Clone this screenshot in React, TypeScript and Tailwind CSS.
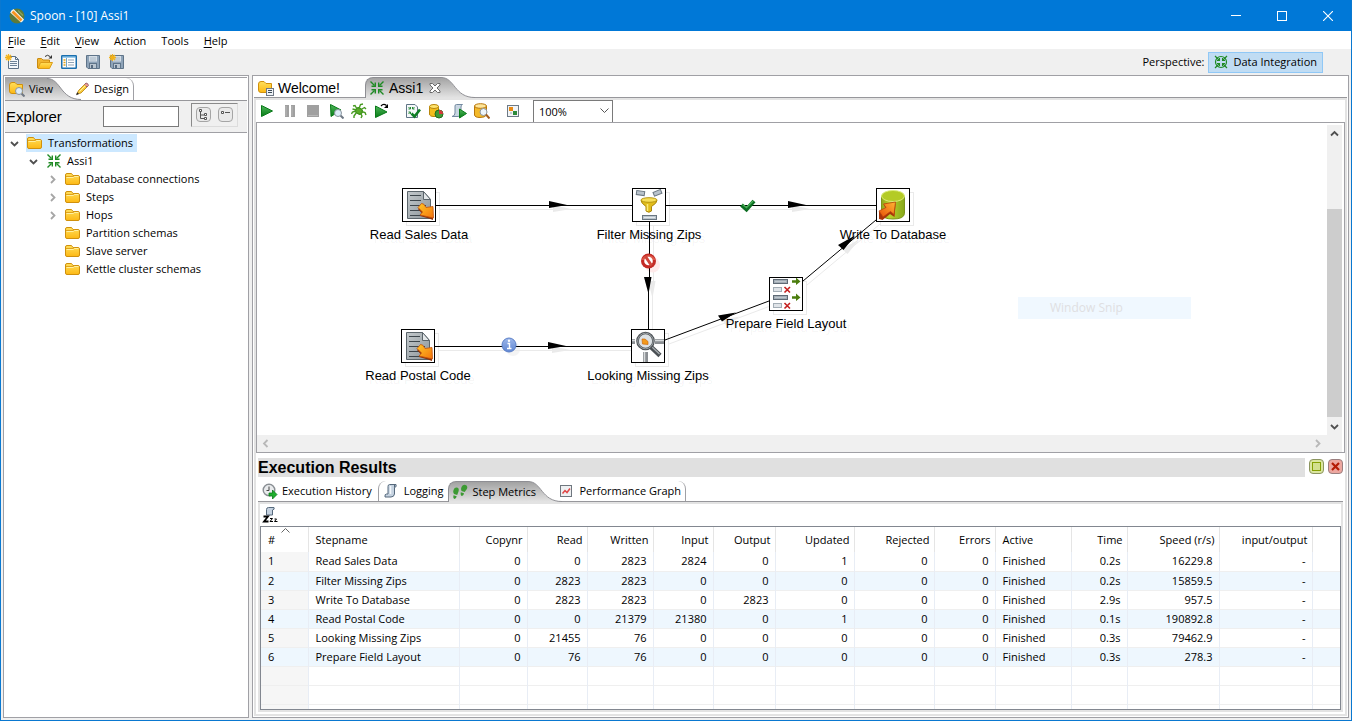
import React from "react";

type IconProps = { children: React.ReactNode; size?: number };

function Ico({ children, size = 16 }: IconProps) {
  return (
    <svg width={size} height={size} viewBox={`0 0 ${size} ${size}`} className="block shrink-0" aria-hidden="true">
      {children}
    </svg>
  );
}

function Gradients() {
  return (
    <svg width="0" height="0" className="absolute" aria-hidden="true">
      <defs>
        <linearGradient id="tab" x1="0" y1="0" x2="0" y2="1">
          <stop offset="0" stopColor="#a2a2a2" />
          <stop offset="1" stopColor="#e4e4e4" />
        </linearGradient>
        <linearGradient id="gold" x1="0" y1="0" x2="0" y2="1">
          <stop offset="0" stopColor="#ffdf5c" />
          <stop offset="1" stopColor="#fdb813" />
        </linearGradient>
        <linearGradient id="play" x1="0" y1="0" x2="0" y2="1">
          <stop offset="0" stopColor="#4fb85a" />
          <stop offset="1" stopColor="#067a16" />
        </linearGradient>
        <linearGradient id="steel" x1="0" y1="0" x2="1" y2="1">
          <stop offset="0" stopColor="#c3c9cc" />
          <stop offset="1" stopColor="#8d969b" />
        </linearGradient>
        <linearGradient id="fire" x1="0" y1="0" x2="1" y2="1">
          <stop offset="0" stopColor="#ffc928" />
          <stop offset="1" stopColor="#f4730c" />
        </linearGradient>
        <linearGradient id="fireUp" x1="0" y1="1" x2="1" y2="0">
          <stop offset="0" stopColor="#e8500a" />
          <stop offset="1" stopColor="#ffb733" />
        </linearGradient>
        <linearGradient id="lime" x1="0" y1="0" x2="1" y2="0">
          <stop offset="0" stopColor="#8fa61b" />
          <stop offset="0.35" stopColor="#bcd22e" />
          <stop offset="1" stopColor="#86a81a" />
        </linearGradient>
        <linearGradient id="info" x1="0" y1="0" x2="0" y2="1">
          <stop offset="0" stopColor="#9db7ea" />
          <stop offset="1" stopColor="#5f86d3" />
        </linearGradient>
      </defs>
    </svg>
  );
}

const Folder = () => (
  <Ico>
    <path d="M0.500 4 Q0.500 2.500 2 2.500 H6.500 L8 4.500 H13 Q14.500 4.500 14.500 6 V12 Q14.500 13.500 13 13.500 H2 Q0.500 13.500 0.500 12 Z" fill="url(#gold)" stroke="#d0900c" />
    <path d="M1.500 6.500 H8 L9.500 5.500 H13.500" fill="none" stroke="#fff0a0" />
    <path d="M1 5.500 H8 L9.500 4.500" fill="none" stroke="#e0a31a" />
  </Ico>
);

const Lens = () => (
  <>
    <path d="M12 12 L15.500 15.500" stroke="#6f7884" strokeWidth="2" />
    <circle cx="10" cy="10" r="3.500" fill="#dcecf8" stroke="#8b949e" />
  </>
);

const FolderLens = () => (
  <Ico>
    <path d="M0.500 4 Q0.500 1.500 3 1.500 H6 L8 3.500 H13.500 V12.500 H3 Q0.500 12.500 0.500 10 Z" fill="url(#gold)" stroke="#d0900c" />
    <Lens />
  </Ico>
);

const FolderPage = () => (
  <Ico>
    <path d="M0.500 4 Q0.500 1.500 3 1.500 H6 L8 3.500 H13.500 V12.500 H3 Q0.500 12.500 0.500 10 Z" fill="url(#gold)" stroke="#d0900c" />
    <rect x="8.500" y="8.500" width="7" height="7" fill="#eef2f6" stroke="#6f7884" />
    <path d="M10 10.500 H14 M10 12.500 H14" stroke="#3c4956" />
  </Ico>
);

const Pencil = () => (
  <Ico>
    <path d="M3 13 L4.500 9.500 L10.500 3.500 L13 6 L7 12 Z" fill="#f8cb3c" stroke="#c08a1c" strokeWidth="0.900" />
    <path d="M10.500 3.500 L12 2 Q14 2 14.500 4.500 L13 6 Z" fill="#ef9a8e" stroke="#8e5a66" strokeWidth="0.900" />
    <path d="M2 14.200 L3.200 11.200 L5 13 Z" fill="#222" />
    <path d="M5.500 10.500 L11.500 4.500" stroke="#fff0a0" />
  </Ico>
);

const InArrows = () => (
  <Ico>
    <g stroke="#1f8a24" fill="none" strokeWidth="1.400">
      <path d="M1.500 1.500 L5.500 5.500 M14.500 1.500 L10.500 5.500 M1.500 14.500 L5.500 10.500 M14.500 14.500 L10.500 10.500" />
      <path d="M2.500 6.300 H6.300 V2.500 M13.500 6.300 H9.700 V2.500 M2.500 9.700 H6.300 V13.500 M13.500 9.700 H9.700 V13.500" />
    </g>
  </Ico>
);

const Star = () => (
  <path d="M3.500 0 V7 M0 3.500 H7 M1 1 L6 6 M6 1 L1 6" stroke="#f3b219" strokeWidth="1.300" />
);

const NewFile = () => (
  <Ico>
    <path d="M3.500 2.500 H10.500 L13.500 5.500 V14.500 H3.500 Z" fill="#f4f8fc" stroke="#5d7186" />
    <path d="M10.500 2.500 V5.500 H13.500" fill="none" stroke="#5d7186" />
    <path d="M5 7.500 H12 M5 9.500 H12 M5 11.500 H12" stroke="#6d8297" />
    <Star />
  </Ico>
);

const OpenFile = () => (
  <Ico>
    <path d="M0.500 14 V5 Q0.500 4.500 1 4.500 H4.500 L6 6 H12.500 V8" fill="#f2b630" stroke="#c98a10" />
    <path d="M1 14.500 L3.500 8.500 H15.500 L12.500 14.500 Z" fill="url(#gold)" stroke="#dc9c18" />
    <path d="M8 2.500 Q10.500 0 13 2.500" fill="none" stroke="#333" />
    <path d="M15 1 V4.500 H11.500 Z" fill="#333" />
  </Ico>
);

const Explore = () => (
  <Ico>
    <rect x="0.750" y="1.750" width="14.500" height="12.500" rx="0.500" fill="#fff" stroke="#1b6fae" strokeWidth="1.500" />
    <path d="M1.500 3 H14.500" stroke="#3f9ad6" />
    <path d="M5.500 4 V13.500" stroke="#6fa6cc" />
    <path d="M2.500 6 H4.500 M2.500 8.500 H4.500 M2.500 11 H4.500" stroke="#e3a21a" strokeWidth="1.500" />
    <path d="M7 6 H13 M7 8.500 H13 M7 11 H13" stroke="#8fa3b5" />
  </Ico>
);

const DiskShape = () => (
  <>
    <path d="M1.500 1.500 H14.500 V14.500 H3 L1.500 13 Z" fill="#8ea3b8" stroke="#5f7489" />
    <rect x="4" y="2" width="8" height="5.500" fill="#d5dee6" />
    <path d="M5 4 H11 M5 6 H11" stroke="#a9b8c6" />
    <rect x="4.500" y="9.500" width="7" height="5" fill="#b9c5d0" stroke="#5f7489" />
    <rect x="6" y="11" width="2" height="3" fill="#566a80" />
  </>
);

const Disk = () => (
  <Ico>
    <DiskShape />
  </Ico>
);

const DiskAs = () => (
  <Ico>
    <DiskShape />
    <Star />
  </Ico>
);

const Play = () => (
  <Ico>
    <path d="M2.500 2.500 L13.500 8 L2.500 13.500 Z" fill="url(#play)" stroke="#0a7a1a" />
  </Ico>
);

const Pause = () => (
  <Ico>
    <rect x="3" y="2" width="4" height="12" fill="#a0a0a0" />
    <rect x="9" y="2" width="4" height="12" fill="#a0a0a0" />
    <path d="M4 3 V13 M10 3 V13" stroke="#b8b8b8" />
  </Ico>
);

const Stop = () => (
  <Ico>
    <rect x="2" y="2" width="12" height="12" fill="#a0a0a0" />
    <path d="M3 12.500 H13" stroke="#b8b8b8" />
  </Ico>
);

const Preview = () => (
  <Ico>
    <path d="M2.500 1.500 L13 7 L3 13.500 Z" fill="url(#play)" stroke="#0a7a1a" />
    <Lens />
  </Ico>
);

const Bug = () => (
  <Ico>
    <ellipse cx="8" cy="8" rx="3.600" ry="3" transform="rotate(35 8 8)" fill="#5aab2b" stroke="#3b8a1a" />
    <path
      d="M6 6 L4 2.500 L2 3 M8 5.500 L9.500 1.500 L12 1 M10 6.500 L13.500 4.500 L15 6 M10.500 8.500 L14 9.500 L15 12 M9.500 10 L11 13 L10 15 M5.500 9.500 L3 13 L3 15 M5 8 L1.500 9 L0.500 11 M5.500 7 L1.500 6"
      fill="none"
      stroke="#469a20"
      strokeWidth="1.400"
    />
  </Ico>
);

const Replay = () => (
  <Ico>
    <path d="M1.500 3 L13 9 L1.500 14.500 Z" fill="url(#play)" stroke="#0a7a1a" />
    <path d="M7 3 Q9.500 0 12.500 2.500" fill="none" stroke="#000" strokeWidth="1.200" />
    <path d="M14 1 V5 H10 Z" fill="#000" />
  </Ico>
);

const Verify = () => (
  <Ico>
    <path d="M1.500 1.500 H10 L12.500 4 V14.500 H1.500 Z" fill="#f5f8fa" stroke="#5f7485" />
    <path d="M3.500 4 L5.500 6 M9.500 4 L7.500 6 M3.500 11 L5.500 9 M3.500 6 H5.500 V4 M9.500 6 H7.500 V4 M3.500 9 H5.500 V11" fill="none" stroke="#278a36" />
    <path d="M6.500 10.500 L9.500 13.500 L15 6.500" fill="none" stroke="#0f7d25" strokeWidth="2.600" />
  </Ico>
);

const Cyl = () => (
  <>
    <path d="M1.500 3.500 V11 Q1.500 13.500 6 13.500 T10.500 11 V3.500 Z" fill="#f3bd1d" stroke="#b8860b" />
    <ellipse cx="6" cy="3.500" rx="4.500" ry="2" fill="#ffe46e" stroke="#b8860b" />
  </>
);

const Impact = () => (
  <Ico>
    <Cyl />
    <circle cx="11" cy="11" r="4" fill="#3f9a35" stroke="#226d1c" />
    <path d="M11 11 V7 A4 4 0 0 1 15 11 Z" fill="#d6383a" />
  </Ico>
);

const SqlRun = () => (
  <Ico>
    <path d="M5.500 1.500 H11.500 Q10 2 10 4 V11 Q9.500 13.500 7 13.500 H1 Q4 13 4 10 V3 Q4 1.500 5.500 1.500 Z" fill="#c9d6e2" stroke="#7389a0" />
    <path d="M8.500 6 L15.500 10.500 L8.500 15 Z" fill="url(#play)" stroke="#0a7a1a" />
  </Ico>
);

const DbLens = () => (
  <Ico>
    <path d="M0.500 3 V12 Q1 14.500 6 14.500 T12.500 12 V3 Z" fill="#f3b92a" stroke="#b8760b" />
    <ellipse cx="6.500" cy="3" rx="6" ry="2.300" fill="#ffe69a" stroke="#b8760b" />
    <circle cx="9.500" cy="9" r="3.500" fill="#eef5fb" stroke="#8b949e" />
    <path d="M12 11.500 L15.500 15.500" stroke="#a35c20" strokeWidth="2" />
  </Ico>
);

const Arrange = () => (
  <Ico>
    <rect x="2.500" y="2.500" width="11" height="11" fill="#f2f4f6" stroke="#6d7a86" />
    <rect x="4" y="4" width="4" height="4" fill="#e88a13" />
    <rect x="8" y="8" width="4" height="4" fill="#2c8a3a" />
    <rect x="5" y="9" width="2" height="2" fill="#c8ced4" />
  </Ico>
);

const History = () => (
  <Ico>
    <circle cx="7" cy="7" r="5.800" fill="#e9ebed" stroke="#8a8f94" strokeWidth="1.400" />
    <path d="M7 3.500 V7.500 H4.500" fill="none" stroke="#444" />
    <path d="M7 10 H10.500 V7 L15 11.500 L10.500 16 V13 H7 Z" fill="#1fae2d" stroke="#0b7a18" strokeWidth="0.800" />
  </Ico>
);

const Scroll = () => (
  <Ico>
    <path d="M5.500 1.500 H12 Q13 4 10.500 4.500 V11 Q10 14 7 14 H1 Q0.500 11 2.500 11 H4 V3.500 Q4 1.500 5.500 1.500 Z" fill="#c5d2e0" stroke="#56697c" />
    <path d="M6.500 3 V11" stroke="#f2f6fa" strokeWidth="1.500" />
    <path d="M10.500 4.500 V2" stroke="#56697c" />
  </Ico>
);

const ScrollSleep = () => (
  <svg width="18" height="18" viewBox="0 0 18 18" className="block" aria-hidden="true">
    <path d="M6.500 1.500 H12 Q13 3.500 10.500 4 V9 H4.500 V3.500 Q4.500 1.500 6.500 1.500 Z" fill="#c5d2e0" stroke="#56697c" />
    <path d="M1.500 10.500 H6 L2 15.500 H6.500" fill="none" stroke="#000" strokeWidth="1.800" />
    <path d="M8 12.500 H10.500 L8 15.500 H11 M12.500 13 H14.500 L12.500 15.500 H15.500" fill="none" stroke="#000" />
  </svg>
);

const Feet = () => (
  <Ico>
    <g fill="#3c9a33">
      <path d="M1.500 6 Q2.500 3.200 5 3.600 Q7.500 4.200 6.500 7.500 L5.200 11 L2 10 Q0.600 8 1.500 6 Z" />
      <path d="M1.500 11.300 L4.700 12.300 Q4.200 15 2.500 15 Q0.800 14.500 1.500 11.300 Z" />
      <path d="M9.500 3 Q11 0.300 13.500 1 Q16 2 15 4.700 L12.700 8 L9.500 7 Q8.500 5 9.500 3 Z" />
      <path d="M8.800 8.300 L12 9.300 Q11.600 12.200 9.800 12 Q8.200 11.500 8.800 8.300 Z" />
    </g>
  </Ico>
);

const Graph = () => (
  <Ico>
    <rect x="1.500" y="2.500" width="11" height="11" fill="#eef0f2" stroke="#6f777f" />
    <path d="M3.500 10.500 L6 7.500 L8 9.500 L11 5.500" fill="none" stroke="#e04848" strokeWidth="1.500" />
  </Ico>
);

const ReadIcon = () => (
  <Ico size={32}>
    <path d="M4.500 2.500 H20.500 L27.500 10.500 V29.500 H4.500 Z" fill="url(#steel)" stroke="#5b656b" />
    <path d="M20.500 2.500 V10.500 H27.500 Z" fill="#e4e8ea" stroke="#5b656b" />
    <path d="M7 6.500 H18 M7 11.500 H18 M7 16.500 H23 M7 21.500 H17 M7 26.500 H19" stroke="#3e474d" />
    <path d="M15 20 L19 16 L23 20 L30 19 V31 L26 29.500 L17 27 L19 24.500 Z" fill="#8f2f06" />
    <path d="M15 18.500 L18.500 14.500 Q21 14 23 18.500 L30 17.500 L30.500 29 L26 28 L17 26 L19.500 23 Z" fill="url(#fire)" stroke="#c2500c" strokeWidth="0.800" />
  </Ico>
);

const WriteIcon = () => (
  <Ico size={32}>
    <path d="M4.500 7 V24.500 Q5 30 16 30 T27.500 24.500 V7 Z" fill="url(#lime)" stroke="#7d951a" />
    <ellipse cx="16" cy="7" rx="11.500" ry="5.500" fill="#b4cb25" stroke="#dcec7c" />
    <path d="M2 23 L9 20 L7 16 L18.500 15 L17.500 28 L13 25 L5.500 31 L2 30 Z" fill="#a9340a" />
    <path d="M2 22 L9 18.500 L6.500 15 L18.500 13 L17 25.500 L13.500 22.500 L6 28 Z" fill="url(#fireUp)" stroke="#b8410a" strokeWidth="0.800" />
  </Ico>
);

const FilterIcon = () => (
  <Ico size={32}>
    <rect x="3.500" y="2" width="8" height="4" transform="rotate(8 7 4)" fill="#b9c3cc" stroke="#6a7681" />
    <rect x="20.500" y="2" width="8" height="4" transform="rotate(-22 24 4)" fill="#b9c3cc" stroke="#6a7681" />
    <path d="M8 11.500 Q8 14 13 17.500 V22 Q16 24.500 18.500 22 V17.500 Q24 14 24 11.500 Z" fill="#e2bd1c" stroke="#a8860c" />
    <path d="M14.500 15 V22" stroke="#fbe97a" strokeWidth="1.500" />
    <ellipse cx="16" cy="11" rx="8" ry="2.300" fill="#f7df5a" stroke="#b8960f" />
    <rect x="9.500" y="26.500" width="14" height="4" fill="#bcc6ce" stroke="#6a7681" />
    <path d="M11 28.500 H22" stroke="#e3e8ec" />
  </Ico>
);

const SelectIcon = () => (
  <Ico size={32}>
    {[0, 16].map((y) => (
      <g key={y} transform={`translate(0 ${y})`}>
        <rect x="3.500" y="1.500" width="14" height="4" fill="#a3adb6" stroke="#5f6a75" />
        <path d="M5 3.500 H16" stroke="#bfc7cd" />
        <path d="M22 2.200 H26 V-0.500 L30.500 3.500 L26 7 V4.800 H22 Z" fill="#4b7d0e" />
        <rect x="3.500" y="9.500" width="8" height="4" fill="#e0e4e8" stroke="#a3adb5" />
        <path d="M14.500 9 L20 14.500 M20 9 L14.500 14.500" stroke="#c4201f" strokeWidth="1.600" />
      </g>
    ))}
  </Ico>
);

const LookupIcon = () => (
  <Ico size={32}>
    <path d="M0 11.500 H3 M23 11.500 H32" stroke="#8b8f93" strokeWidth="5" />
    <path d="M0 10.500 H3 M23 10.500 H32" stroke="#d6d9db" strokeWidth="1.500" />
    <path d="M13.500 22 V32" stroke="#8b8f93" strokeWidth="5" />
    <path d="M12.500 22 V32" stroke="#d6d9db" strokeWidth="1.500" />
    <path d="M19 17 L28 25.500" stroke="#4b5054" strokeWidth="4.500" />
    <path d="M20 17 L27.500 24" stroke="#a9aeb2" strokeWidth="1.200" />
    <circle cx="13.500" cy="11" r="8" fill="#dde2e5" stroke="#4b5054" strokeWidth="2.600" />
    <circle cx="13.500" cy="11" r="7.800" fill="none" stroke="#9ba1a5" strokeWidth="1" />
    <path d="M10 9 H13 L16 11.500 V14.500 L10.500 14 Z" fill="#f39a1c" stroke="#cf6c10" strokeWidth="0.700" />
  </Ico>
);

const NODES = [
  { label: "Read Sales Data", x: 145, y: 65, Icon: ReadIcon },
  { label: "Filter Missing Zips", x: 375, y: 65, Icon: FilterIcon },
  { label: "Write To Database", x: 619, y: 65, Icon: WriteIcon },
  { label: "Prepare Field Layout", x: 512, y: 154, Icon: SelectIcon },
  { label: "Looking Missing Zips", x: 374, y: 206, Icon: LookupIcon },
  { label: "Read Postal Code", x: 144, y: 206, Icon: ReadIcon },
];

function Hops() {
  return (
    <g stroke="#000" fill="#000">
      <path
        d="M179 82.500 H375 M409 82.500 H619 M178 223.500 H374 M392.500 99 V154 M391.500 154 V206"
        shapeRendering="crispEdges"
      />
      <path d="M408 217 L512 178 M546 158 L619 97" fill="none" />
      <g stroke="none">
        <path d="M292 78 L310 82 L292 85 Z M531 78 L549 82 L531 85 Z M291 219 L309 223 L291 226 Z" />
        <path d="M387 154 L394.500 154 L391.500 171 Z" />
        <path d="M461 192.500 L479 189.500 L465 198.500 Z M581 122 L598 112.500 L586.500 127 Z" />
      </g>
    </g>
  );
}

function Badges() {
  return (
    <g>
      <path d="M484.500 82 L489.500 86.500 L497 78" fill="none" stroke="#0d6e22" strokeWidth="4" />
      <path d="M485.500 81.500 L489.500 84.500 L496 78" fill="none" stroke="#49ad57" strokeWidth="1.500" />
      <circle cx="391.500" cy="138" r="7.500" fill="#c42a25" />
      <path d="M384.500 137 A7.500 7.500 0 0 1 398.500 137 Z" fill="#dc5a4a" />
      <circle cx="391.500" cy="138" r="4.300" fill="#fff" />
      <path d="M388.500 133.500 L394.500 142.500" stroke="#d0463c" strokeWidth="3" />
      <circle cx="252" cy="222" r="7" fill="url(#info)" stroke="#5c80c8" />
      <path d="M250.500 220.500 H252.500 V225.500 M250 225.500 H254.500" fill="none" stroke="#fff" strokeWidth="1.400" />
      <circle cx="252" cy="217.800" r="1.200" fill="#fff" />
    </g>
  );
}

function Canvas() {
  return (
    <div className="relative min-w-0 flex-1 overflow-hidden bg-white">
      <svg className="absolute inset-0 h-full w-full" aria-hidden="true">
        <g transform="translate(4 4)" opacity="0.08">
          <Hops />
          {NODES.map((n) => (
            <rect key={n.label} x={n.x + 0.5} y={n.y + 0.5} width="33" height="33" fill="none" stroke="#000" />
          ))}
          <circle cx="391.500" cy="138" r="7.500" fill="#f00" />
          <circle cx="252" cy="222" r="7" fillOpacity="0.5" />
        </g>
        <Hops />
      </svg>
      {NODES.map(({ label, x, y, Icon }) => (
        <div key={label} className="absolute flex w-[34px] flex-col items-center" style={{ left: x, top: y }}>
          <div className="border border-black bg-white">
            <Icon />
          </div>
          <span className="mt-[5px] font-['Liberation_Sans',Arial,sans-serif] text-[13px] leading-4 whitespace-nowrap text-black [text-shadow:4px_4px_0_rgba(0,0,0,0.05)]">
            {label}
          </span>
        </div>
      ))}
      <svg className="absolute inset-0 h-full w-full" aria-hidden="true">
        <Badges />
      </svg>
      <div className="absolute top-[174px] left-[761px] flex h-[22px] w-[173px] items-center bg-[#f0f8ff] pl-8 text-xs text-[#dfdfe2]">
        Window Snip
      </div>
    </div>
  );
}

function Chevron({ dir, color = "#505050" }: { dir: "up" | "down" | "left" | "right"; color?: string }) {
  const d = {
    up: "M1 6.500 L4.500 3 L8 6.500",
    down: "M1 3 L4.500 6.500 L8 3",
    left: "M6.500 1 L3 4.500 L6.500 8",
    right: "M3 1 L6.500 4.500 L3 8",
  }[dir];
  return (
    <svg width="9" height="9" viewBox="0 0 9 9" className="block shrink-0" aria-hidden="true">
      <path d={d} fill="none" stroke={color} strokeWidth="1.800" />
    </svg>
  );
}

function TabCurve({ height }: { height: number }) {
  return (
    <svg width="34" height={height} viewBox="0 0 34 22" preserveAspectRatio="none" className="block shrink-0" aria-hidden="true">
      <path d="M0 0.500 C14 0.500 13 21.500 34 21.500 V22 H0 Z" fill="url(#tab)" />
      <path d="M0 0.500 C14 0.500 13 21.500 34 21.500" fill="none" stroke="#8e8e93" />
    </svg>
  );
}

const activeTab =
  "flex items-center rounded-tl-lg border-t border-l border-[#8e8e93] bg-linear-to-b from-[#a2a2a2] to-[#e4e4e4]";

const TREE = [
  { label: "Database connections", open: true },
  { label: "Steps", open: true },
  { label: "Hops", open: true },
  { label: "Partition schemas", open: false },
  { label: "Slave server", open: false },
  { label: "Kettle cluster schemas", open: false },
];

function Sidebar() {
  return (
    <aside className="flex w-[246px] shrink-0 flex-col border border-[#a0a0a5] bg-white p-px">
      <div className="flex h-6 border-t border-b border-t-[#a0a0a5] border-b-[#97979b]" role="tablist">
        <button role="tab" aria-selected="true" className="flex">
          <span className="flex h-[22px] items-center gap-1 bg-linear-to-b from-[#a2a2a2] to-[#e4e4e4] pl-1">
            <FolderLens />
            <span className="z-10 w-[18px]">View</span>
          </span>
          <TabCurve height={22} />
        </button>
        <button role="tab" aria-selected="false" className="-ml-[7px] flex items-center rounded-tr-lg border-r border-[#a0a0a5] pr-1">
          <Pencil />
          <span className="pl-1">Design</span>
        </button>
      </div>
      <div className="flex h-8 items-center border-b border-[#a0a0a5] bg-[#f0f0f0]">
        <label htmlFor="filter" className="w-[98px] pl-px font-['Liberation_Sans',Arial,sans-serif] text-[15px]">
          Explorer
        </label>
        <input id="filter" className="h-[21px] w-[76px] border border-[#7a7a7a] bg-white px-1" />
        <div className="mb-1 ml-3 flex h-6 w-[47px] items-center gap-[7px] border border-t-[#8a8a8a] border-r-[#dcdcdc] border-b-[#dcdcdc] border-l-[#8a8a8a] pl-1">
          <button aria-label="Expand all" className="flex h-[15px] w-[15px] items-center justify-center rounded-sm border border-[#a5a5a5] bg-[#e9e9e9]">
            <svg width="11" height="11" viewBox="0 0 11 11" aria-hidden="true">
              <path d="M2.500 3 V9.500 H6 M2.500 6 H6" fill="none" stroke="#555" />
              <path d="M1.500 0.500 H3.500 V2.500 H1.500 Z M6.500 4.500 H8.500 V6.500 H6.500 Z M6.500 8.500 H8.500 V10.500 H6.500 Z" fill="#fff" stroke="#555" />
            </svg>
          </button>
          <button aria-label="Collapse all" className="flex h-[15px] w-[15px] items-center justify-center rounded-sm border border-[#a5a5a5] bg-[#e9e9e9]">
            <svg width="11" height="11" viewBox="0 0 11 11" aria-hidden="true">
              <path d="M1.500 2.500 H3.500 V4.500 H1.500 Z" fill="#fff" stroke="#555" />
              <path d="M5 3.500 H10" stroke="#555" />
            </svg>
          </button>
        </div>
      </div>
      <ul className="flex flex-col pt-px leading-[18px]">
        <li className="flex items-center pl-[5px]">
          <Chevron dir="down" />
          <span className="ml-[7px] flex h-[18px] items-center gap-[5px] bg-[#cce8ff] pr-1 pl-px">
            <Folder />
            Transformations
          </span>
        </li>
        <li className="flex items-center gap-2 pl-6">
          <Chevron dir="down" />
          <span className="flex items-center gap-[5px]">
            <InArrows />
            Assi1
          </span>
        </li>
        {TREE.map((item) => (
          <li key={item.label} className="flex items-center gap-2 pl-[43px]">
            {item.open ? <Chevron dir="right" color="#a6a6a6" /> : <span className="w-[9px]" />}
            <span className="flex items-center gap-[5px]">
              <Folder />
              {item.label}
            </span>
          </li>
        ))}
      </ul>
    </aside>
  );
}

const COLUMNS = [
  { name: "#", w: "w-[47px]", left: true },
  { name: "Stepname", w: "w-[151px]", left: true },
  { name: "Copynr", w: "w-[68px]", left: false },
  { name: "Read", w: "w-[60px]", left: false },
  { name: "Written", w: "w-[66px]", left: false },
  { name: "Input", w: "w-[60px]", left: false },
  { name: "Output", w: "w-[62px]", left: false },
  { name: "Updated", w: "w-[79px]", left: false },
  { name: "Rejected", w: "w-[80px]", left: false },
  { name: "Errors", w: "w-[61px]", left: false },
  { name: "Active", w: "w-[76px]", left: true },
  { name: "Time", w: "w-[56px]", left: false },
  { name: "Speed (r/s)", w: "w-[92px]", left: false },
  { name: "input/output", w: "w-[93px]", left: false },
];

const ROWS = [
  ["1", "Read Sales Data", "0", "0", "2823", "2824", "0", "1", "0", "0", "Finished", "0.2s", "16229.8", "-"],
  ["2", "Filter Missing Zips", "0", "2823", "2823", "0", "0", "0", "0", "0", "Finished", "0.2s", "15859.5", "-"],
  ["3", "Write To Database", "0", "2823", "2823", "0", "2823", "0", "0", "0", "Finished", "2.9s", "957.5", "-"],
  ["4", "Read Postal Code", "0", "0", "21379", "21380", "0", "1", "0", "0", "Finished", "0.1s", "190892.8", "-"],
  ["5", "Looking Missing Zips", "0", "21455", "76", "0", "0", "0", "0", "0", "Finished", "0.3s", "79462.9", "-"],
  ["6", "Prepare Field Layout", "0", "76", "76", "0", "0", "0", "0", "0", "Finished", "0.3s", "278.3", "-"],
];

function MetricsTable() {
  const blank = COLUMNS.map(() => "");
  return (
    <div className="border border-[#828790] bg-white">
      <table className="w-full table-fixed border-collapse leading-[18px]">
        <thead>
          <tr className="h-[25px]">
            {COLUMNS.map((c) => (
              <th
                key={c.name}
                scope="col"
                className={`${c.w} relative border-r border-[#e5e5e5] p-0 font-normal ${c.left ? "pl-[7px] text-left" : "pr-1 text-right"}`}
              >
                {c.name}
                {c.name === "#" && (
                  <svg width="9" height="5" viewBox="0 0 9 5" className="absolute top-px left-5" aria-hidden="true">
                    <path d="M0.500 4.500 L4.500 0.500 L8.500 4.500" fill="none" stroke="#666" />
                  </svg>
                )}
              </th>
            ))}
            <td />
          </tr>
        </thead>
        <tbody>
          {[...ROWS, blank, blank].map((row, r) => {
            const tinted = r % 2 === 1 && r < ROWS.length;
            return (
              <tr key={r} className={`h-[19px] border-b border-[#efefef] ${tinted ? "bg-[#eef7fe]" : ""}`}>
                {row.map((value, c) => (
                  <td
                    key={c}
                    className={`border-r border-[#e8edf5] p-0 ${c === 0 && !tinted ? "bg-[#f6f6f6]" : ""} ${COLUMNS[c].left ? "pl-[7px]" : "pr-[6px] text-right"}`}
                  >
                    {value}
                  </td>
                ))}
                <td />
              </tr>
            );
          })}
          <tr className="h-[5px]">
            {blank.map((_, c) => (
              <td key={c} className={`border-r border-[#e8edf5] p-0 ${c === 0 ? "bg-[#f6f6f6]" : ""}`} />
            ))}
            <td className="p-0" />
          </tr>
        </tbody>
      </table>
    </div>
  );
}

function Results() {
  return (
    <section className="flex flex-col px-[2px] pt-[5px] pb-[2px]">
      <div className="flex items-center">
        <h2 className="h-[19px] flex-1 bg-[#e0e0e0] font-['Liberation_Sans',Arial,sans-serif] text-base leading-[19px] font-bold">
          Execution Results
        </h2>
        <button aria-label="Maximize panel" className="mb-[3px] ml-1 flex h-[15px] w-[15px] items-center justify-center rounded-sm border border-[#8b9460] bg-[#dbe6a0]">
          <span className="h-[9px] w-[9px] border border-[#86a004] bg-[#d3e08f]" />
        </button>
        <button aria-label="Close panel" className="mb-[3px] ml-1 flex h-[15px] w-[15px] items-center justify-center rounded-sm border border-[#9a7f7f] bg-[#eda7a0]">
          <svg width="9" height="9" viewBox="0 0 9 9" aria-hidden="true">
            <path d="M1 1 L8 8 M8 1 L1 8" stroke="#b51a05" strokeWidth="2.200" />
          </svg>
        </button>
      </div>
      <div className="mt-1 flex h-[21px] border-b border-[#97979b]" role="tablist">
        <button role="tab" aria-selected="false" className="flex items-center gap-1 pr-[6px] pl-1">
          <History />
          Execution History
        </button>
        <button role="tab" aria-selected="false" className="flex items-center gap-1 rounded-tl-lg border-l border-[#a0a0a5] px-[5px]">
          <Scroll />
          Logging
        </button>
        <button role="tab" aria-selected="true" className="flex">
          <span className={`${activeTab} h-[21px] gap-1 pl-[3px]`}>
            <Feet />
            <span className="z-10 w-14 whitespace-nowrap">Step Metrics</span>
          </span>
          <TabCurve height={21} />
        </button>
        <button role="tab" aria-selected="false" className="-ml-[3px] flex items-center gap-1 rounded-tr-lg border-r border-[#a0a0a5] pr-1">
          <Graph />
          Performance Graph
        </button>
      </div>
      <div className="border-2 border-[#e3e3e3]">
        <div className="flex h-[22px] items-center pl-[2px]">
          <button aria-label="Pause logging">
            <ScrollSleep />
          </button>
        </div>
        <MetricsTable />
      </div>
    </section>
  );
}

const TOOLS = [
  { name: "Run", Icon: Play, gap: "" },
  { name: "Pause", Icon: Pause, gap: "ml-[7px]" },
  { name: "Stop", Icon: Stop, gap: "ml-[7px]" },
  { name: "Preview", Icon: Preview, gap: "ml-[7px]" },
  { name: "Debug", Icon: Bug, gap: "ml-[7px]" },
  { name: "Replay", Icon: Replay, gap: "ml-[7px]" },
  { name: "Verify", Icon: Verify, gap: "ml-[15px]" },
  { name: "Impact", Icon: Impact, gap: "ml-[7px]" },
  { name: "SQL", Icon: SqlRun, gap: "ml-[7px]" },
  { name: "Explore database", Icon: DbLens, gap: "ml-[7px]" },
  { name: "Show results", Icon: Arrange, gap: "ml-[15px]" },
];

function Editor() {
  return (
    <main className="flex min-w-0 flex-1 flex-col border border-[#a0a0a5] bg-white px-px pb-px">
      <div className="flex h-[22px] border-b border-[#97979b] font-['Liberation_Sans',Arial,sans-serif] text-sm" role="tablist">
        <button role="tab" aria-selected="false" className="flex w-[111px] items-center gap-1 pt-[3px] pl-1">
          <FolderPage />
          Welcome!
        </button>
        <button role="tab" aria-selected="true" className="flex pt-px">
          <span className={`${activeTab} h-[21px] gap-1 pl-[3px]`}>
            <InArrows />
            Assi1
            <svg width="12" height="12" viewBox="0 0 12 12" className="ml-[2px]" aria-label="Close">
              <path
                d="M1 1.500 H3.500 L6 4 L8.500 1.500 H11 V3 L8 6 L11 9 V10.500 H8.500 L6 8 L3.500 10.500 H1 V9 L4 6 L1 3 Z"
                fill="#fff"
                stroke="#6a6a6a"
              />
            </svg>
          </span>
          <TabCurve height={21} />
        </button>
      </div>
      <div className="flex min-h-0 flex-1 flex-col border-2 border-[#e3e3e3]">
        <div className="flex h-[22px] shrink-0 items-center pl-[3px]">
          {TOOLS.map(({ name, Icon, gap }) => (
            <button key={name} aria-label={name} className={gap}>
              <Icon />
            </button>
          ))}
          <div className="relative ml-3 flex h-full w-20 items-center">
            <select aria-label="Zoom" className="h-full w-full appearance-none border border-b-0 border-[#7a7a7a] bg-white pl-[5px]">
              <option>100%</option>
              <option>200%</option>
              <option>50%</option>
            </select>
            <svg width="9" height="6" viewBox="0 0 9 6" className="pointer-events-none absolute right-1" aria-hidden="true">
              <path d="M0.500 0.500 L4.500 4.500 L8.500 0.500" fill="none" stroke="#555" />
            </svg>
          </div>
        </div>
        <div className="flex min-h-[200px] flex-1 flex-col border border-[#a0a0a5] pr-[2px]">
          <div className="flex min-h-0 flex-1">
            <Canvas />
            <div className="mt-[2px] flex w-[15px] flex-col items-center bg-[#f0f0f0] pt-1 pb-1">
              <Chevron dir="up" />
              <div className="mt-[71px] mb-[5px] w-full flex-1 bg-[#cdcdcd]" />
              <Chevron dir="down" />
            </div>
          </div>
          <div className="flex h-[17px] items-center justify-between bg-[#f0f0f0] pr-5 pl-1">
            <Chevron dir="left" color="#b8b8b8" />
            <Chevron dir="right" color="#b8b8b8" />
          </div>
        </div>
        <Results />
      </div>
    </main>
  );
}

const MENUS = [
  { key: "F", rest: "ile" },
  { key: "E", rest: "dit" },
  { key: "V", rest: "iew" },
  { key: "", rest: "Action" },
  { key: "", rest: "Tools" },
  { key: "H", rest: "elp" },
];

export default function App() {
  return (
    <div className="flex h-screen min-h-[600px] flex-col border border-t-0 border-[#0a78d0] bg-[#f0f0f0] font-['Open_Sans','Noto_Sans',sans-serif] text-[11px] leading-4 text-black">
      <Gradients />
      <header className="flex h-[31px] shrink-0 items-center bg-[#0078d7] pl-2 text-white">
        <svg width="16" height="16" viewBox="0 0 16 16" aria-hidden="true">
          <circle cx="8" cy="8" r="7.500" fill="#5d7a3a" />
          <path d="M4.500 1 L15 11.500 A7.500 7.500 0 0 1 12 14.500 L1.200 4.500 A7.500 7.500 0 0 1 4.500 1 Z" fill="#f4f4ee" />
          <path d="M4.500 2.500 L13.500 11.500 L11.500 13.500 L2.500 4.500 Z" fill="#f7941d" />
          <path d="M9 2.500 L14 7.500" stroke="#8aa05a" strokeWidth="1.500" />
        </svg>
        <h1 className="ml-[5px] flex-1 text-xs">Spoon - [10] Assi1</h1>
        <button aria-label="Minimize" className="flex h-full w-[46px] items-center justify-center">
          <span className="h-px w-[10px] bg-white" />
        </button>
        <button aria-label="Maximize" className="flex h-full w-[46px] items-center justify-center">
          <span className="h-[10px] w-[10px] border border-white" />
        </button>
        <button aria-label="Close" className="flex h-full w-[46px] items-center justify-center">
          <svg width="10" height="10" viewBox="0 0 10 10" aria-hidden="true">
            <path d="M0 0 L10 10 M10 0 L0 10" stroke="#fff" strokeWidth="1.100" />
          </svg>
        </button>
      </header>
      <nav className="flex h-[18px] shrink-0 items-center gap-[15px] bg-white pt-[2px] pl-[7px]">
        {MENUS.map((m) => (
          <button key={m.rest}>
            {m.key && <span className="underline underline-offset-2">{m.key}</span>}
            {m.rest}
          </button>
        ))}
      </nav>
      <div className="flex h-[26px] shrink-0 items-center gap-2 pr-7 pl-1">
        <button aria-label="New" className="mr-2">
          <NewFile />
        </button>
        <button aria-label="Open">
          <OpenFile />
        </button>
        <button aria-label="Explore repository">
          <Explore />
        </button>
        <button aria-label="Save">
          <Disk />
        </button>
        <button aria-label="Save as" className="mr-auto">
          <DiskAs />
        </button>
        <span className="-mr-1">Perspective:</span>
        <button className="flex h-[21px] items-center gap-1 border border-[#90c8f6] bg-[#c0dcf3] pr-[5px] pl-1">
          <svg width="16" height="16" viewBox="0 0 16 16" aria-hidden="true">
            <circle cx="8" cy="8" r="5.500" fill="none" stroke="#1f8a24" strokeWidth="1.200" />
            <path d="M2 2 L6 6 M14 2 L10 6 M2 14 L6 10 M14 14 L10 10" stroke="#1f8a24" strokeWidth="1.200" />
            <path d="M4 6.500 H6.500 V4 M12 6.500 H9.500 V4 M4 9.500 H6.500 V12 M12 9.500 H9.500 V12" fill="none" stroke="#1f8a24" strokeWidth="1.100" />
          </svg>
          Data Integration
        </button>
      </div>
      <div className="flex min-h-0 flex-1 gap-[3px] pr-[2px] pb-[2px] pl-[2px]">
        <Sidebar />
        <Editor />
      </div>
    </div>
  );
}
